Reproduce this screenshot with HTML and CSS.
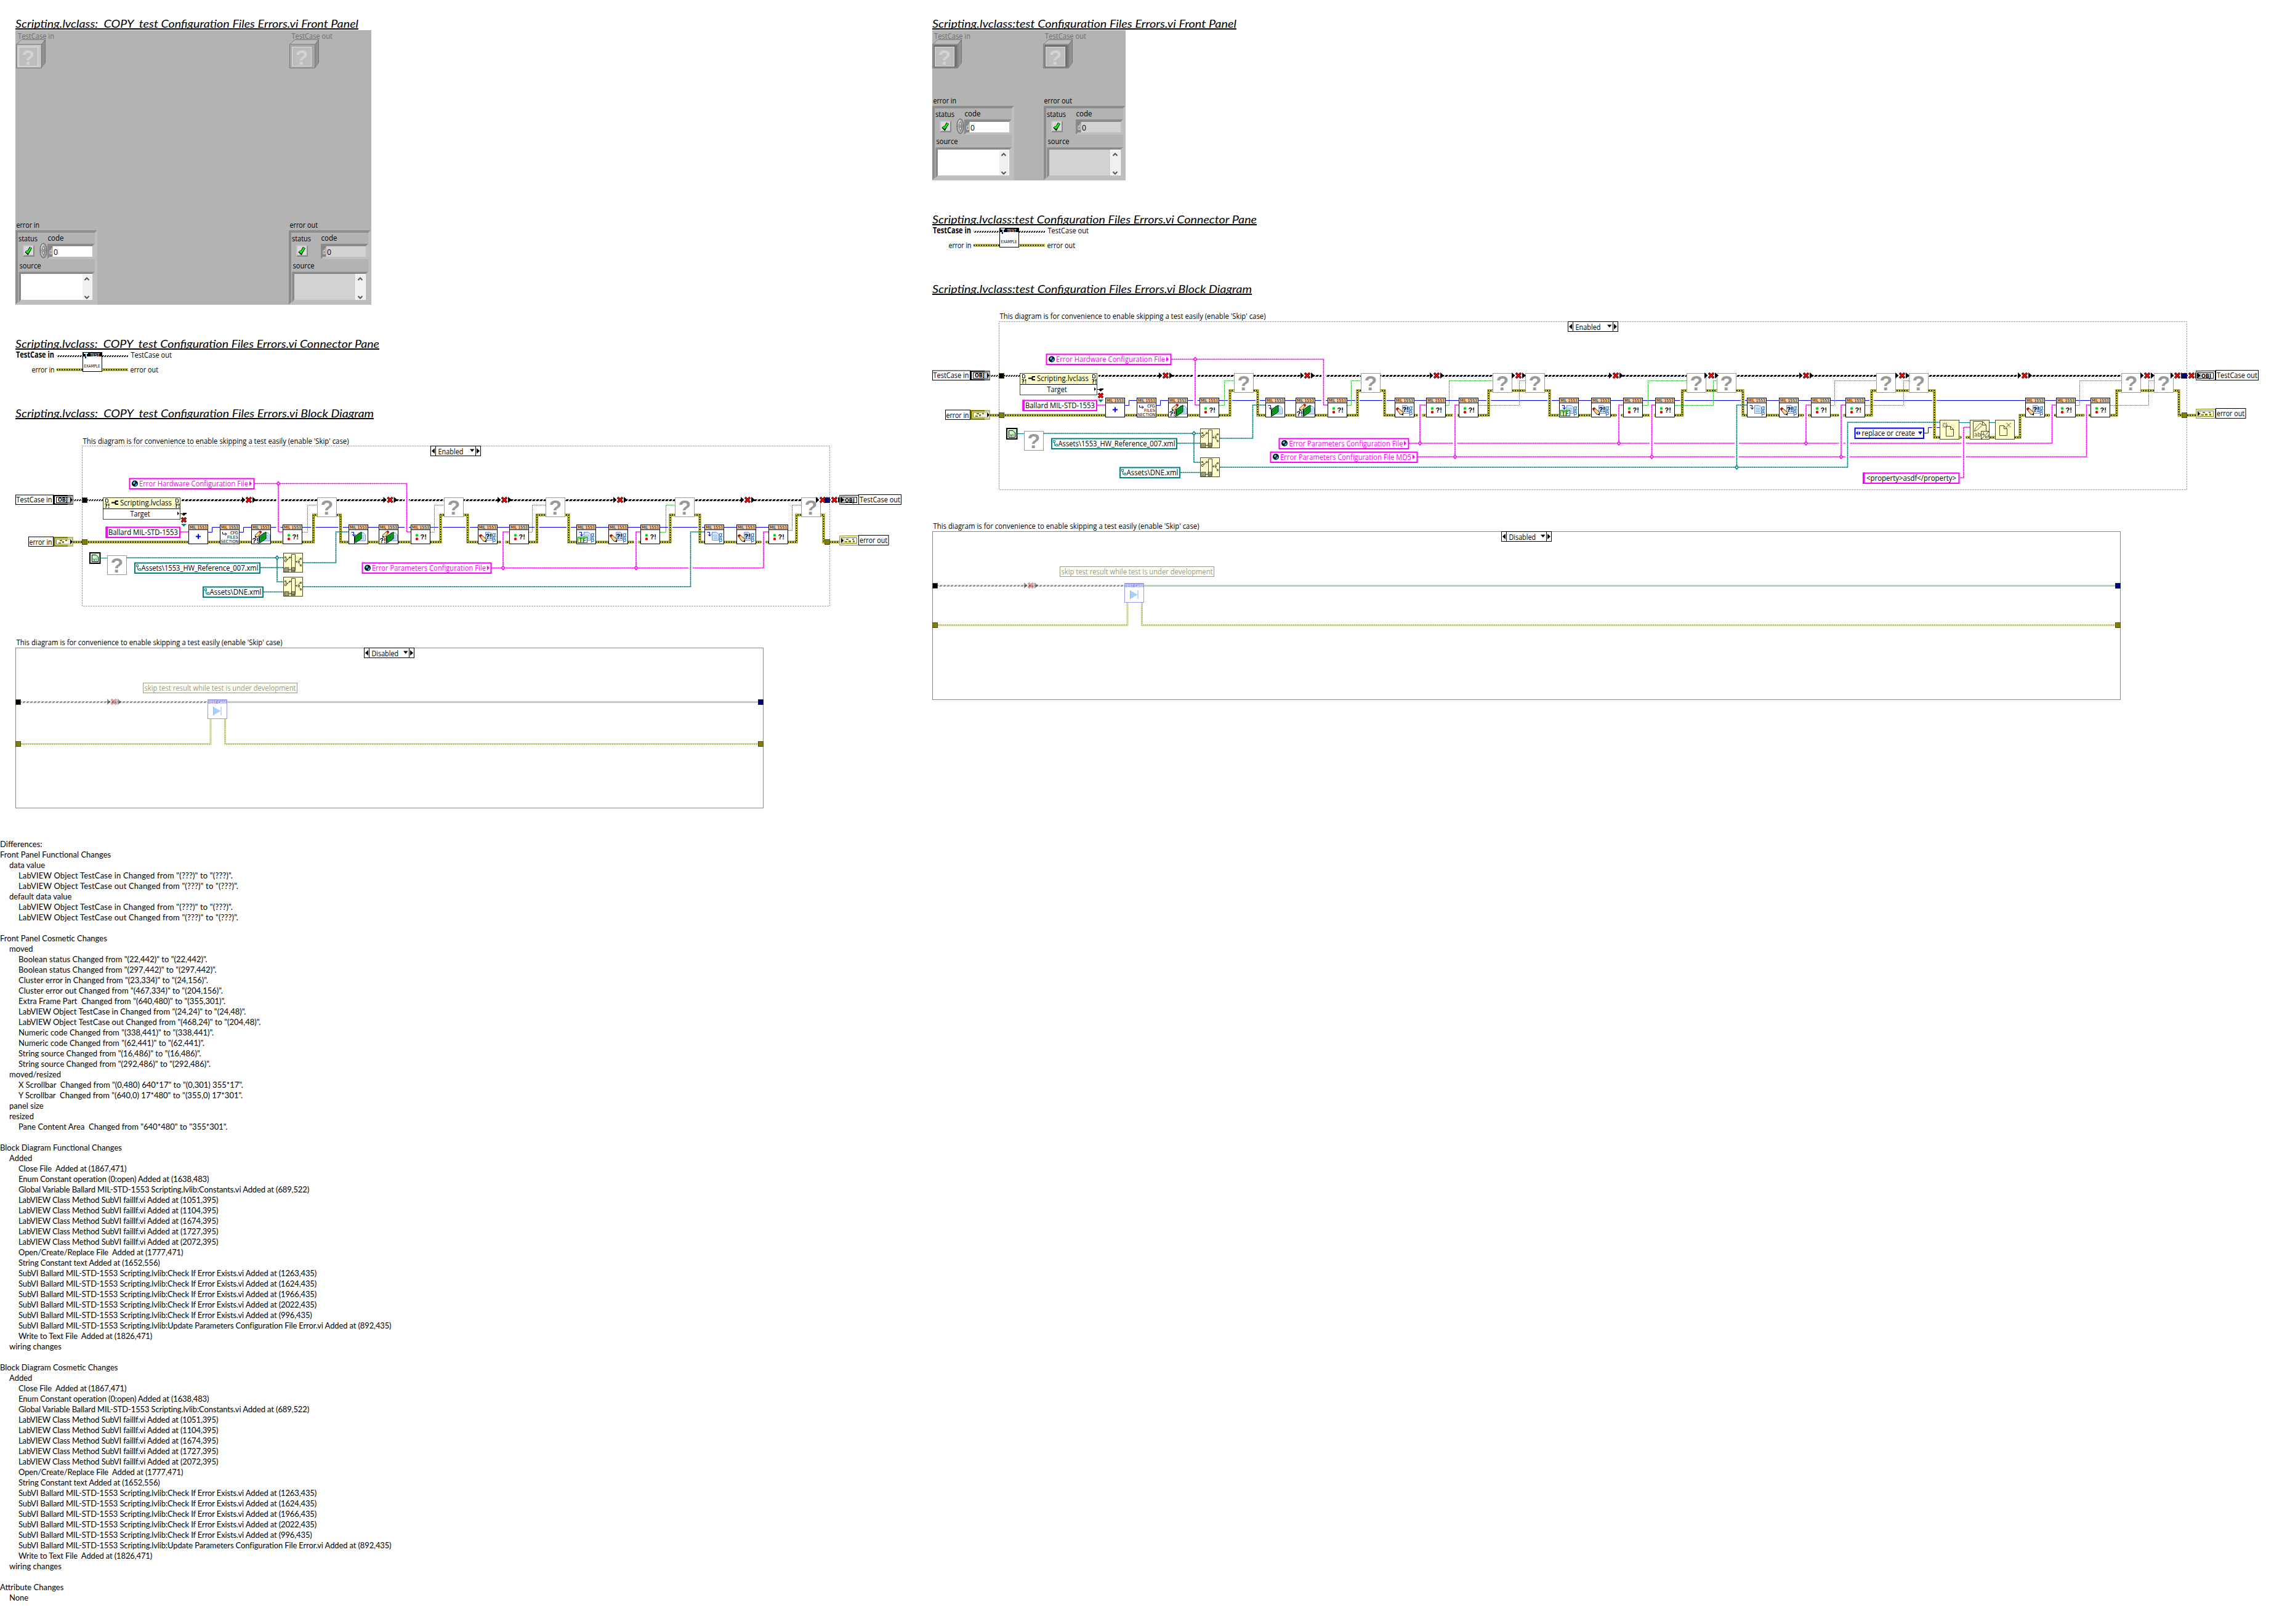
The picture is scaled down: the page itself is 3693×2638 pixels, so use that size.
FILE: index.html
```html
<!DOCTYPE html>
<html lang="en">
<head>
<meta charset="utf-8">
<title>VI comparison report</title>
<link rel="stylesheet" href="styles.css">
</head>
<body>
<svg class="library" width="0" height="0" aria-hidden="true">
  <defs>
    <pattern id="bus" width="6" height="3" patternUnits="userSpaceOnUse"><path d="M2 0H6L4 3H0Z"/></pattern>
    <pattern id="bus-off" width="6" height="3" patternUnits="userSpaceOnUse"><path d="M2 0H6L4 3H0Z" fill="#999"/></pattern>
    <pattern id="bus-fine" width="4" height="3" patternUnits="userSpaceOnUse"><path d="M2 0H4L2 3H0Z"/></pattern>
    <pattern id="hatch" width="2" height="2" patternUnits="userSpaceOnUse"><path d="M0 0h1v1h1v1h-1v-1h-1z" fill="#4a4a30"/></pattern>

    <g id="vi">
      <rect x=".5" y=".5" width="31" height="31" fill="#fff" stroke="#000"/>
      <rect x="1" y="1" width="30" height="7" fill="#fc9"/>
      <path d="M1 8.5H31" stroke="#000"/>
      <text class="tiny" x="2" y="7.2" textLength="28" lengthAdjust="spacingAndGlyphs">MIL 1553</text>
    </g>
    <g id="doc">
      <path d="M.5 .5H8L11.500 4V13.500H.5Z" fill="#cfe4ff" stroke="#7d93c4"/>
      <path d="M2.500 5.500H9M2.500 8H9M2.500 10.500H9" stroke="#8ab4ee"/>
    </g>
    <g id="pencil">
      <path d="M0 1L3 -1L12 7L11 11L7 10Z" fill="#ffd98a" stroke="#000" stroke-width=".8"/>
      <path d="M0 1L3 -1L5 1L2 4Z" fill="#e00000"/>
      <path d="M9 10L12 8V12Z"/>
    </g>
    <g id="alphabeta" class="greek"><text x="23" y="20">α</text><text x="23" y="28">β</text></g>
    <g id="load" fill="none" stroke="#00009c"><path d="M4.500 12.500H8.500V18.500M6 16L8.500 19L11 16"/></g>
    <g id="card"><path d="M13 19L24 12V23L14 30Z" fill="#00a020" stroke="#003000"/><path d="M16 20L21 17V21L16 24Z" fill="#267a26"/><path d="M12.500 19V31" stroke="#000"/></g>
    <g id="vi-new"><use href="#vi"/><path d="M12 19.500H20M16 15.500V23.500" stroke="#00f" stroke-width="2"/></g>
    <g id="vi-cfg"><use href="#vi"/><path d="M4.500 12V15.500H11M8.500 13L11 15.500L8.500 18" fill="none" stroke="#00009c"/>
      <g class="tiny"><text x="17" y="16" textLength="13">CFG</text><text x="12" y="23" textLength="18" lengthAdjust="spacingAndGlyphs">FILES</text><text x="1.500" y="30" textLength="29" lengthAdjust="spacingAndGlyphs">SECTION</text></g></g>
    <g id="vi-compare"><use href="#vi"/><circle cx="10" cy="17.500" r="2.200" fill="#00d800"/><circle cx="10" cy="23.500" r="2.200" fill="#e00000"/><text class="mark" x="15.500" y="24">?!</text></g>
    <g id="vi-card"><use href="#vi"/><use href="#doc" x="19" y="13"/><use href="#card"/><use href="#pencil" transform="translate(17 11) scale(-.9 .9)"/><text class="mark" x="1.500" y="30">?!</text></g>
    <g id="vi-loadcard"><use href="#vi"/><use href="#doc" x="16" y="13"/><use href="#card" x="-3"/><use href="#load"/></g>
    <g id="vi-edit"><use href="#vi"/><use href="#doc" x="12" y="12"/><use href="#pencil" x="2" y="17"/><text class="mark" x="12.500" y="23">?!</text><use href="#alphabeta"/></g>
    <g id="vi-load"><use href="#vi"/><use href="#doc" x="12" y="12"/><use href="#load"/><use href="#alphabeta"/></g>
    <g id="vi-tf"><use href="#vi-load"/><rect x="2.500" y="20.500" width="15" height="9" fill="#fff" stroke="#008000"/><text class="tf" x="4" y="28.500">TF</text></g>

    <g id="unknown"><rect x=".5" y=".5" width="31" height="31" fill="#fff" stroke="#999"/><text class="query" x="16" y="28">?</text></g>
    <g id="cut">
      <rect x="-7" y="-4" width="14" height="8" fill="#fff"/>
      <path d="M-11 -5L-5.500 0L-11 5ZM6 -5L12 0L6 5Z"/>
      <path d="M-4 -4L4 4M4 -4L-4 4" stroke="#000" stroke-width="3.600"/>
      <path d="M-4 4L4 -4M-3.500 -3.500L3.500 3.500" stroke="#f00" stroke-width="2.300"/>
    </g>
    <g id="build"><rect x=".5" y=".5" width="31" height="31" fill="#ffc" stroke="#4a4a30"/>
      <path d="M13.500 2.500H19.500V28.500H13.500ZM2.500 6.500h2v2h-2zM6.500 11.500h-4v3h2zM4 8L7 11L10 8M9 7.500H13M11 5.500V9.500M20 14.500H23M22 12.500V16.500M24.500 12.500L28 9.500M24.500 16L28 19.500M24.500 13.500h2v2h-2zM27.500 8.500h2v2h-2zM27.500 19.500h2v2h-2zM9 27.500H13" fill="none" stroke="#4a4a30"/>
      <path d="M2 24h7v7H2zM13 24h6v7H13z" fill="url(#hatch)" stroke="#4a4a30"/></g>
    <g id="globe"><circle r="5" fill="#000"/><path d="M-3 -2L0 -4L1 -1L-1 1L-3 0ZM1 1L4 -1L3 3L0 4Z" fill="#2cf"/></g>
    <g id="pathmark" fill="none" stroke="#008080"><path d="M.5 .5h3v3h-3zM2.500 4V8.500H4M4.500 6.500h3v3h-3z"/></g>
    <g id="selector"><rect x=".5" y=".5" width="81" height="16" fill="#fff" stroke="#000"/><path d="M8.500 0V17M73.500 0V17" stroke="#000"/><path d="M7 4V13L2 8.500ZM75 4V13L80 8.500ZM64 5.500H71.500L67.800 10Z"/></g>

    <g id="obj-in"><rect width="32" height="16"/><rect x="2" y="2" width="29" height="12" fill="#fff"/><rect x="4.500" y="3.500" width="24" height="9" fill="#fff" stroke="#000"/><text class="obj" x="7" y="11" textLength="16" lengthAdjust="spacingAndGlyphs">OBJ</text><rect x="23" width="9" height="16" fill="#aaa" opacity=".55"/><path d="M27 4V12L31 8Z"/></g>
    <g id="obj-out"><rect x=".5" y=".5" width="31" height="15" fill="#fff" stroke="#000"/><rect x="3.500" y="3.500" width="25" height="9" fill="#fff" stroke="#000"/><text class="obj" x="9" y="11.500" textLength="16" lengthAdjust="spacingAndGlyphs">OBJ</text><rect width="9" height="16" fill="#888" opacity=".5"/><path d="M2 3V13L8 8Z"/></g>
    <g id="err-in"><rect width="32" height="16" fill="#808000"/><rect x="3" y="2.500" width="27" height="11" fill="#fff"/><rect x="4.500" y="4" width="23" height="8" fill="#fff" stroke="#808000"/><path d="M8 9h4v2H8zM14 7h3v3h-3zM19 5h3v2h-3zM10 5h4v2h-4z" fill="#808000"/><rect x="23" width="9" height="16" fill="#ddc" opacity=".6"/><path d="M27 4V12L31 8Z"/></g>
    <g id="err-out"><rect x=".5" y=".5" width="31" height="15" fill="#fff" stroke="#808000"/><rect x="3.500" y="3.500" width="25" height="9" fill="#fff" stroke="#808000"/><path d="M11 5h4v2h-4zM9 9h4v2H9zM15 8h4v3h-4zM21 5h3v2h-3zM22 8h3v3h-3z" fill="#808000"/><rect width="9" height="16" fill="#bb8" opacity=".5"/><path d="M3 4V12L7 8Z"/></g>

    <g id="skip"><rect x=".5" y=".5" width="31" height="31" fill="#fff" stroke="#99e"/><rect x="1" y="1" width="30" height="6" fill="#99e"/><text class="tiny light" x="1" y="6.500" textLength="30" lengthAdjust="spacingAndGlyphs">TEST CASE</text><path d="M9.500 12V26L21.500 19Z" fill="#a8d0ff"/><path d="M9.500 12V26M22 12V26" stroke="#9ab8d8"/></g>

    <g id="cube"><path d="M.5 8L9 .5H47.500V38L41 46.500H.5Z" fill="#aaa" stroke="#777"/><path d="M1 8L9 1H47L41 8Z" fill="#bcbcbc"/><path d="M41.500 8L47 1V38L41.500 46Z" fill="#909090"/><path d="M.5 8H41.500V46.500M41.500 8L47.500 .5" fill="none" stroke="#777"/>
      <rect x="2" y="9" width="38.500" height="36.500" fill="currentColor"/><rect x="4.500" y="12.500" width="31" height="31" fill="#bdbdbd" stroke="#dcdcdc"/><text class="query pale" x="20" y="41">?</text></g>

    <g id="cluster">
      <rect width="133" height="121" fill="#b3b3b3"/>
      <path d="M0 0H133L129 4H4V117L0 121Z" fill="#8d8d8d"/><path d="M133 0V121H0L4 117H129V4Z" fill="#bebebe"/>
      <text class="t" x="5" y="17.500" textLength="31" lengthAdjust="spacingAndGlyphs">status</text><text class="t" x="52.500" y="16.500" textLength="26" lengthAdjust="spacingAndGlyphs">code</text><text class="t" x="6.500" y="61.500" textLength="35" lengthAdjust="spacingAndGlyphs">source</text>
      <rect x="12" y="24" width="19" height="19" fill="#8a8a8a"/><path d="M12 43V24H31L29 26H14V41Z" fill="#c4c4c4"/><rect x="14" y="26" width="15" height="14.500" fill="#dadada"/><path d="M17 34L20 37L25 28" fill="none" stroke="#000" stroke-width="4.500"/><path d="M17.500 34L20 36L25 28.500" fill="none" stroke="#0f0" stroke-width="2.600"/>
      <path d="M52 22H129L125 26H56V43L52 47Z" fill="#8a8a8a"/><path d="M129 22V47H52L56 43H125V26Z" fill="#bfbfbf"/><rect x="56" y="26" width="69" height="17" fill="currentColor"/><rect x="55" y="26" width="5.500" height="17" fill="#858585"/><text class="t radix" x="55" y="39" textLength="5" lengthAdjust="spacingAndGlyphs">d</text><text class="t" x="62" y="39.500" textLength="7" lengthAdjust="spacingAndGlyphs">0</text>
      <path d="M5.500 67.500H129L125 71H9V113L5.500 117Z" fill="#8a8a8a"/><path d="M129 67.500V117H5.500L9 113H125V71Z" fill="#bfbfbf"/><rect x="9" y="71" width="116" height="42" fill="currentColor"/><rect x="108" y="71" width="17" height="42" fill="#fff"/><rect x="109" y="72" width="15" height="40" fill="#f0f0f0"/>
      <path d="M112.500 81L116 77.500L119.500 81M112.500 107L116 110.500L119.500 107" fill="none" stroke="#555" stroke-width="2"/>
    </g>
    <g id="spinner"><ellipse cx="45.500" cy="33" rx="5.500" ry="12" fill="#a4a4a4" stroke="#5c5c5c"/><ellipse cx="44.500" cy="32" rx="3" ry="9.500" fill="#cfcfcf"/><path d="M43 31L45.500 25.500L48 31ZM43 35L45.500 40.500L48 35Z" fill="#eee" stroke="#444" stroke-width=".8"/><path d="M40.500 33H50.500" stroke="#666"/></g>

    <path id="pane-error" d="M67 32.500H183"/>
    <g id="pane">
      <rect y="9" x="67" width="42" height="3" fill="url(#bus-fine)"/><rect y="9" x="141" width="42" height="3" fill="url(#bus-fine)"/>
      <use href="#pane-error" class="err-a"/><use href="#pane-error" class="err-b"/><use href="#pane-error" class="err-c"/>
      <rect x="109.500" y="4.500" width="31" height="31" fill="#fff" stroke="#000"/><rect x="110" y="5" width="30" height="6"/><path d="M111 5h7v2h-2v5h-2v-5h-3z" fill="#bff"/><path d="M113 11h2v3h-2z" fill="#00f"/><text class="tiny light" x="121" y="10.500" textLength="16">TEST</text><text class="tiny" x="111.500" y="29" textLength="26" lengthAdjust="spacingAndGlyphs">EXAMPLE</text>
      <text class="t bold" x="1" y="12.500" textLength="62" lengthAdjust="spacingAndGlyphs">TestCase in</text><text class="t" x="187.500" y="12.500" textLength="66.500" lengthAdjust="spacingAndGlyphs">TestCase out</text>
      <text class="t" x="26.500" y="36.500" textLength="37" lengthAdjust="spacingAndGlyphs">error in</text><text class="t" x="186.500" y="36.500" textLength="45.500" lengthAdjust="spacingAndGlyphs">error out</text>
    </g>

    <!-- Parts common to both block diagrams: object row, then VI row -->
    <g id="object-row">
      <rect x="25.500" y="804" width="61" height="15.500" fill="#fff" stroke="#000"/><text class="t" x="26.500" y="816" textLength="58" lengthAdjust="spacingAndGlyphs">TestCase in</text>
      <use href="#obj-in" x="87" y="804"/><g transform="translate(0 811)"><rect x="119" width="48" height="3" fill="url(#bus-fine)"/></g>
      <rect x="133.500" y="808.500" width="8" height="8" stroke="#4a4a30"/>
      <rect x="167.500" y="808.500" width="125" height="35" fill="#fff" stroke="#4a4a30"/><rect x="168" y="809" width="124" height="17" fill="#ffc"/><path d="M167 826.500H293" stroke="#000"/>
      <path d="M171.500 810.500h3l1 1.500v4h-4zM285.500 810.500h3l1 1.500v4h-4z" fill="#fff" stroke="#000"/><text class="micro" x="170" y="824.500">?!</text><text class="micro" x="284" y="824.500">?!</text>
      <path d="M181 816.500H187M187 814H192M187 819H192M187.500 814V819" fill="none" stroke="#000" stroke-width="2"/>
      <text class="t" x="195" y="821" textLength="84" lengthAdjust="spacingAndGlyphs">Scripting.lvclass</text><text class="t" x="211.500" y="839" textLength="32" lengthAdjust="spacingAndGlyphs">Target</text>
      <path d="M288 831V837L291 834ZM294 834H303L298.500 838ZM297 833H303V835H297Z"/><path d="M293 834.500H303" stroke="#000"/><path d="M295 841L302 848M302 841L295 848" stroke="#000" stroke-width="3.600"/><path d="M295 848L302 841M295.500 841.500L301.500 847.500" stroke="#f00" stroke-width="2.200"/><path d="M294 851H303L298.500 855.500Z" fill="#008080"/>
      <rect x="210.500" y="777.500" width="202" height="16.500" fill="#fff" stroke="#f0f" stroke-width="2"/><use href="#globe" x="219" y="785.500"/><text class="t pink" x="226" y="790" textLength="177" lengthAdjust="spacingAndGlyphs">Error Hardware Configuration File</text><path d="M405 781.500V789.500L409 785.500Z" fill="#f0f"/>
      <rect x="146" y="898" width="16.500" height="17" fill="#cfc" stroke="#000" stroke-width="2"/><path d="M149.500 901.500H156L159.500 905V912.500H149.500Z" fill="#cfc" stroke="#000"/><text class="tiny" x="151" y="911">vi</text><path class="teal-thin" d="M163 906.500H174"/><use href="#unknown" x="174" y="902"/>
      <path class="teal" d="M206 906H460"/><path class="teal" d="M423 922H460"/>
      <rect x="219" y="914.500" width="203" height="16.500" fill="#fff" stroke="#008080" stroke-width="2"/><use href="#pathmark" x="221" y="917"/><text class="t" x="229.500" y="927" textLength="190" lengthAdjust="spacingAndGlyphs">Assets\1553_HW_Reference_007.xml</text>
    </g>
    <g id="vi-row">
      <rect x="46.500" y="872" width="40" height="15.500" fill="#fff" stroke="#000"/><text class="t" x="47.500" y="884.500" textLength="37" lengthAdjust="spacingAndGlyphs">error in</text><use href="#err-in" x="87" y="872"/>
      <rect x="133.500" y="876.500" width="8" height="8" fill="#808000" stroke="#4a4a30"/>
      <rect x="172.500" y="856.500" width="119.500" height="16.500" fill="#fff" stroke="#f0f" stroke-width="2"/><rect x="171.500" y="855.500" width="3.500" height="18.500" fill="#f0f"/><text class="t" x="176" y="869" textLength="113" lengthAdjust="spacingAndGlyphs">Ballard MIL-STD-1553</text><path class="pink-a" d="M293 864H306"/>
      <use href="#vi-new" x="306" y="852"/><use href="#vi-cfg" x="357" y="852"/><use href="#vi-card" x="408" y="852"/><use href="#vi-compare" x="459" y="852"/><use href="#vi-loadcard" x="566" y="852"/><use href="#vi-card" x="615" y="852"/><use href="#vi-compare" x="667" y="852"/>
    </g>
    <g id="dne"><rect x="330" y="953.500" width="97" height="16.500" fill="#fff" stroke="#008080" stroke-width="2"/><use href="#pathmark" x="332" y="956"/><text class="t" x="340.500" y="966" textLength="84" lengthAdjust="spacingAndGlyphs">Assets\DNE.xml</text><path class="teal" d="M428 961.500H460"/></g>
    <g id="skip-body">
      <text class="t" x="26.500" y="1048" textLength="432" lengthAdjust="spacingAndGlyphs">This diagram is for convenience to enable skipping a test easily (enable 'Skip' case)</text>
      <rect x="232.500" y="1109.500" width="250" height="16" fill="#fffff0" stroke="#999"/><text class="t faded" x="234.500" y="1122" textLength="246" lengthAdjust="spacingAndGlyphs">skip test result while test is under development</text>
      <g transform="translate(0 1139)"><rect x="34" width="303" height="3" fill="url(#bus-off)"/></g><use href="#cut" x="185" y="1140" opacity=".4"/>
      <rect x="25.500" y="1136.500" width="8" height="8" stroke="#4a4a30"/>
    </g>

    <!-- Error wires -->
    <path id="error-copy" d="M119 880.500H509V836.500H553V880.500H715.500V836.500H759.500V880.500H872V836.500H923.500V880.500H1088.500V836.500H1136.500V880.500H1293.500V836.500H1337.500V880.500H1363"/>
    <path id="error-test" d="M1608 674.500H1997.500V634.500H2042.500V674.500H2204.500V634.500H2248.500V674.500H2417.500V634.500H2516.500V674.500H2732V634.500H2830.500V674.500H3039.500V634.500H3141.500V710.500H3280.500V674.500H3437.500V634.500H3538.500V674.500H3567"/>
    <path id="error-copy-off" d="M34 1208.500H342V1168M365.500 1168V1208.500H1231"/>
    <path id="error-test-off" d="M1523 1015.500H1831V979M1854.500 979V1015.500H3435"/>
  </defs>
</svg>

<main class="report">
  <div class="side">
    <section class="front">
      <h2><svg width="557" height="21"><text class="title" y="19.500" textLength="557" lengthAdjust="spacingAndGlyphs">Scripting.lvclass:&#160; COPY&#160; test Configuration Files Errors.vi Front Panel</text></svg></h2>
      <svg class="figure" width="578" height="446" viewBox="25 49 578 446">
        <rect x="25" y="49" width="578" height="446" fill="#b3b3b3"/>
        <text class="t dim" x="29" y="62.500" textLength="59" lengthAdjust="spacingAndGlyphs">TestCase in</text><text class="t dim" x="473.500" y="62.500" textLength="66.500" lengthAdjust="spacingAndGlyphs">TestCase out</text>
        <use href="#cube" x="26" y="64" color="#c8c8c8"/><use href="#cube" x="470" y="64" color="#a8a8a8"/>
        <text class="t" x="26.500" y="369.500" textLength="37.500" lengthAdjust="spacingAndGlyphs">error in</text><text class="t" x="470.500" y="369.500" textLength="45.500" lengthAdjust="spacingAndGlyphs">error out</text>
        <use href="#cluster" x="25" y="374" color="#fff"/><use href="#spinner" x="25" y="374"/><use href="#cluster" x="469" y="374" color="#d2d2d2"/>
      </svg>
    </section>
    <section class="connector">
      <h2><svg width="591" height="21"><text class="title" y="19.500" textLength="591" lengthAdjust="spacingAndGlyphs">Scripting.lvclass:&#160; COPY&#160; test Configuration Files Errors.vi Connector Pane</text></svg></h2>
      <svg class="figure" width="300" height="90"><use href="#pane"/></svg>
    </section>
    <section class="block">
      <h2><svg width="582" height="21"><text class="title" y="19.500" textLength="582" lengthAdjust="spacingAndGlyphs">Scripting.lvclass:&#160; COPY&#160; test Configuration Files Errors.vi Block Diagram</text></svg></h2>
      <svg class="figure" width="1460" height="350" viewBox="25 681 1460 350">
        <text class="t" x="134.500" y="720.500" textLength="432" lengthAdjust="spacingAndGlyphs">This diagram is for convenience to enable skipping a test easily (enable 'Skip' case)</text>
        <path class="frame" d="M133.500 724.500H1347.500V984.500H133.500Z"/>
        <use href="#selector" x="699" y="724"/><text class="t" x="711.500" y="737.500" textLength="41" lengthAdjust="spacingAndGlyphs">Enabled</text>
        <g transform="translate(0 811)"><rect x="295" width="1040" height="3" fill="url(#bus)"/></g>
        <path class="bool" d="M491 864.500H499.500V820.500H515M699 864.500H705.500V820.500H721M859 864.500H864.500V820.500H886M1072 864.500H1081.500V820.500H1096M1280 861.500H1286.500V820.500H1301"/>
        <path class="blue" d="M338 864.500H344.500V856.500H357M389 864.500H395.500V856.500H408M440 856.500H1248"/>
        <use href="#error-copy" class="halo"/><use href="#error-copy" class="err-a"/><use href="#error-copy" class="err-b"/><use href="#error-copy" class="err-c"/>
        <path class="halo" d="M452 786V862M660.500 786V862M817 918V866M1033 918V866M1240 918V866"/>
        <path class="pink-a" d="M413 785.500H660.500V864H667M452 786V864H459M798 922.500H1240V864H1248M817 922V864H827M1033 922V864H1040"/>
        <path class="dot-pink" d="M452 782.500l2.500 3-2.500 3-2.500-3zM817 919.500l2.500 3-2.500 3-2.500-3zM1033 919.500l2.500 3-2.500 3-2.500-3z"/>
        <path class="halo" d="M1121.500 928V917"/>
        <path class="teal" d="M450 906V945H460M492 914H545.500V864H566M492 953H1121.500V864H1144"/>
        <use href="#object-row"/><use href="#dne"/><use href="#vi-row"/>
        <path class="dot-teal" d="M450 903l2.500 3-2.500 3-2.500-3z"/>
        <use href="#build" x="460" y="898"/><use href="#build" x="460" y="937"/>
        <rect x="588.500" y="914.500" width="209" height="16.500" fill="#fff" stroke="#f0f" stroke-width="2"/><use href="#globe" x="597" y="922.500"/><text class="t pink" x="604" y="927" textLength="185" lengthAdjust="spacingAndGlyphs">Error Parameters Configuration File</text><path d="M791 918.500V926.500L795 922.500Z" fill="#f0f"/>
        <use href="#unknown" x="515" y="808"/><use href="#unknown" x="721" y="808"/><use href="#unknown" x="886" y="808"/><use href="#unknown" x="1096" y="808"/><use href="#unknown" x="1301" y="808"/>
        <use href="#vi-edit" x="776" y="852"/><use href="#vi-compare" x="827" y="852"/><use href="#vi-tf" x="936" y="852"/><use href="#vi-edit" x="988" y="852"/><use href="#vi-compare" x="1040" y="852"/><use href="#vi-load" x="1144" y="852"/><use href="#vi-edit" x="1196" y="852"/><use href="#vi-compare" x="1248" y="852"/>
        <use href="#cut" x="404" y="812"/><use href="#cut" x="633.500" y="812"/><use href="#cut" x="819" y="812"/><use href="#cut" x="1007" y="812"/><use href="#cut" x="1214" y="812"/><use href="#cut" x="1336" y="812"/><use href="#cut" x="1355" y="812"/>
        <rect x="1339.500" y="808.500" width="8" height="8" fill="#000080" stroke="#223"/><rect x="1339.500" y="876.500" width="8" height="8" fill="#808000" stroke="#4a4a30"/>
        <use href="#obj-out" x="1363" y="804"/><rect x="1394.500" y="803.500" width="69" height="16" fill="#fff" stroke="#000"/><text class="t" x="1396" y="816" textLength="66" lengthAdjust="spacingAndGlyphs">TestCase out</text>
        <use href="#err-out" x="1363" y="870"/><rect x="1394.500" y="869.500" width="48.500" height="16" fill="#fff" stroke="#000"/><text class="t" x="1396" y="882" textLength="45" lengthAdjust="spacingAndGlyphs">error out</text>
      </svg>
      <svg class="figure" width="1460" height="332" viewBox="25 1031 1460 332">
        <rect x="25.500" y="1052.500" width="1214" height="260" fill="none" stroke="#888"/>
        <use href="#skip-body"/>
        <use href="#selector" x="591" y="1052"/><text class="t" x="603.500" y="1065.500" textLength="43.500" lengthAdjust="spacingAndGlyphs">Disabled</text>
        <path class="off-a" d="M369 1140.500H1231"/>
        <use href="#error-copy-off" class="offerr-a"/><use href="#error-copy-off" class="offerr-b"/><use href="#error-copy-off" class="offerr-c"/>
        <use href="#skip" x="337" y="1136"/>
        <rect x="25.500" y="1204.500" width="8" height="8" fill="#808000" stroke="#4a4a30"/><rect x="1231.500" y="1204.500" width="8" height="8" fill="#808000" stroke="#4a4a30"/><rect x="1231.500" y="1136.500" width="8" height="8" fill="#000080" stroke="#223"/>
      </svg>
    </section>
    <section class="differences">
      <p>Differences:</p>
      <h3>Front Panel Functional Changes</h3>
      <ul>
        <li>data value<ul class="values"><li>LabVIEW Object TestCase in Changed from "(???)" to "(???)".</li><li>LabVIEW Object TestCase out Changed from "(???)" to "(???)".</li></ul></li>
        <li>default data value<ul class="values"><li>LabVIEW Object TestCase in Changed from "(???)" to "(???)".</li><li>LabVIEW Object TestCase out Changed from "(???)" to "(???)".</li></ul></li>
      </ul>
      <h3>Front Panel Cosmetic Changes</h3>
      <ul>
        <li>moved<ul>
          <li>Boolean status Changed from "(22,442)" to "(22,442)".</li>
          <li>Boolean status Changed from "(297,442)" to "(297,442)".</li>
          <li>Cluster error in Changed from "(23,334)" to "(24,156)".</li>
          <li>Cluster error out Changed from "(467,334)" to "(204,156)".</li>
          <li>Extra Frame Part&#160; Changed from "(640,480)" to "(355,301)".</li>
          <li>LabVIEW Object TestCase in Changed from "(24,24)" to "(24,48)".</li>
          <li>LabVIEW Object TestCase out Changed from "(468,24)" to "(204,48)".</li>
          <li>Numeric code Changed from "(338,441)" to "(338,441)".</li>
          <li>Numeric code Changed from "(62,441)" to "(62,441)".</li>
          <li>String source Changed from "(16,486)" to "(16,486)".</li>
          <li>String source Changed from "(292,486)" to "(292,486)".</li></ul></li>
        <li>moved/resized<ul>
          <li>X Scrollbar&#160; Changed from "(0,480) 640*17" to "(0,301) 355*17".</li>
          <li>Y Scrollbar&#160; Changed from "(640,0) 17*480" to "(355,0) 17*301".</li></ul></li>
        <li>panel size</li>
        <li>resized<ul><li>Pane Content Area&#160; Changed from "640*480" to "355*301".</li></ul></li>
      </ul>
      <h3>Block Diagram Functional Changes</h3>
      <ul>
        <li>Added<ul class="added">
          <li>Close File&#160; Added at (1867,471)</li>
          <li>Enum Constant operation (0:open) Added at (1638,483)</li>
          <li>Global Variable Ballard MIL-STD-1553 Scripting.lvlib:Constants.vi Added at (689,522)</li>
          <li>LabVIEW Class Method SubVI failIf.vi Added at (1051,395)</li>
          <li>LabVIEW Class Method SubVI failIf.vi Added at (1104,395)</li>
          <li>LabVIEW Class Method SubVI failIf.vi Added at (1674,395)</li>
          <li>LabVIEW Class Method SubVI failIf.vi Added at (1727,395)</li>
          <li>LabVIEW Class Method SubVI failIf.vi Added at (2072,395)</li>
          <li>Open/Create/Replace File&#160; Added at (1777,471)</li>
          <li>String Constant text Added at (1652,556)</li>
          <li>SubVI Ballard MIL-STD-1553 Scripting.lvlib:Check If Error Exists.vi Added at (1263,435)</li>
          <li>SubVI Ballard MIL-STD-1553 Scripting.lvlib:Check If Error Exists.vi Added at (1624,435)</li>
          <li>SubVI Ballard MIL-STD-1553 Scripting.lvlib:Check If Error Exists.vi Added at (1966,435)</li>
          <li>SubVI Ballard MIL-STD-1553 Scripting.lvlib:Check If Error Exists.vi Added at (2022,435)</li>
          <li>SubVI Ballard MIL-STD-1553 Scripting.lvlib:Check If Error Exists.vi Added at (996,435)</li>
          <li>SubVI Ballard MIL-STD-1553 Scripting.lvlib:Update Parameters Configuration File Error.vi Added at (892,435)</li>
          <li>Write to Text File&#160; Added at (1826,471)</li></ul></li>
        <li>wiring changes</li>
      </ul>
      <h3>Block Diagram Cosmetic Changes</h3>
      <ul>
        <li>Added<ul class="added">
          <li>Close File&#160; Added at (1867,471)</li>
          <li>Enum Constant operation (0:open) Added at (1638,483)</li>
          <li>Global Variable Ballard MIL-STD-1553 Scripting.lvlib:Constants.vi Added at (689,522)</li>
          <li>LabVIEW Class Method SubVI failIf.vi Added at (1051,395)</li>
          <li>LabVIEW Class Method SubVI failIf.vi Added at (1104,395)</li>
          <li>LabVIEW Class Method SubVI failIf.vi Added at (1674,395)</li>
          <li>LabVIEW Class Method SubVI failIf.vi Added at (1727,395)</li>
          <li>LabVIEW Class Method SubVI failIf.vi Added at (2072,395)</li>
          <li>Open/Create/Replace File&#160; Added at (1777,471)</li>
          <li>String Constant text Added at (1652,556)</li>
          <li>SubVI Ballard MIL-STD-1553 Scripting.lvlib:Check If Error Exists.vi Added at (1263,435)</li>
          <li>SubVI Ballard MIL-STD-1553 Scripting.lvlib:Check If Error Exists.vi Added at (1624,435)</li>
          <li>SubVI Ballard MIL-STD-1553 Scripting.lvlib:Check If Error Exists.vi Added at (1966,435)</li>
          <li>SubVI Ballard MIL-STD-1553 Scripting.lvlib:Check If Error Exists.vi Added at (2022,435)</li>
          <li>SubVI Ballard MIL-STD-1553 Scripting.lvlib:Check If Error Exists.vi Added at (996,435)</li>
          <li>SubVI Ballard MIL-STD-1553 Scripting.lvlib:Update Parameters Configuration File Error.vi Added at (892,435)</li>
          <li>Write to Text File&#160; Added at (1826,471)</li></ul></li>
        <li>wiring changes</li>
      </ul>
      <h3>Attribute Changes</h3>
      <ul><li>None</li></ul>
    </section>
  </div>

  <div class="side">
    <section class="front">
      <h2><svg width="494" height="21"><text class="title" y="19.500" textLength="494" lengthAdjust="spacingAndGlyphs">Scripting.lvclass:test Configuration Files Errors.vi Front Panel</text></svg></h2>
      <svg class="figure" width="314" height="244" viewBox="1514 49 314 244">
        <rect x="1514" y="49" width="314" height="244" fill="#b3b3b3"/>
        <text class="t dim" x="1517" y="62.500" textLength="59" lengthAdjust="spacingAndGlyphs">TestCase in</text><text class="t dim" x="1697" y="62.500" textLength="67" lengthAdjust="spacingAndGlyphs">TestCase out</text>
        <use href="#cube" x="1514" y="64" color="#707070"/><use href="#cube" x="1694" y="64" color="#707070"/>
        <text class="t" x="1515.500" y="167.500" textLength="37.500" lengthAdjust="spacingAndGlyphs">error in</text><text class="t" x="1695.500" y="167.500" textLength="45.500" lengthAdjust="spacingAndGlyphs">error out</text>
        <use href="#cluster" x="1514" y="172" color="#fff"/><use href="#spinner" x="1514" y="172"/><use href="#cluster" x="1695" y="172" color="#d2d2d2"/>
      </svg>
    </section>
    <section class="connector">
      <h2><svg width="527" height="21"><text class="title" y="19.500" textLength="527" lengthAdjust="spacingAndGlyphs">Scripting.lvclass:test Configuration Files Errors.vi Connector Pane</text></svg></h2>
      <svg class="figure" width="300" height="90"><use href="#pane"/></svg>
    </section>
    <section class="block">
      <h2><svg width="519" height="21"><text class="title" y="19.500" textLength="519" lengthAdjust="spacingAndGlyphs">Scripting.lvclass:test Configuration Files Errors.vi Block Diagram</text></svg></h2>
      <svg class="figure" width="2179" height="350" viewBox="1514 479 2179 350">
        <text class="t" x="1623.500" y="518" textLength="432" lengthAdjust="spacingAndGlyphs">This diagram is for convenience to enable skipping a test easily (enable 'Skip' case)</text>
        <path class="frame" d="M1622.500 522.500H3551.500V795.500H1622.500Z"/>
        <use href="#selector" x="2546" y="522"/><text class="t" x="2558.500" y="535.500" textLength="41" lengthAdjust="spacingAndGlyphs">Enabled</text>
        <g transform="translate(0 609)"><rect x="1784" width="1755" height="3" fill="url(#bus)"/></g>
        <path class="blue" d="M1827 658.500H1833.500V650.500H1846M1878 658.500H1884.500V650.500H1897M1929 650.500H3395M3125 703.500H3131.500V694.500H3150"/>
        <use href="#error-test" class="halo"/><use href="#error-test" class="err-a"/><use href="#error-test" class="err-b"/><use href="#error-test" class="err-c"/>
        <path class="bool" d="M1980 658.500H1988.500V618.500H2004M2188 658.500H2194.500V618.500H2210M2348 658.500H2353.500V618.500H2424M2401 658.500H2467.500V618.500H2477M2668 658.500H2676.500V618.500H2739M2720 658.500H2782.500V618.500H2788M2973 658.500H2979.500V618.500H3047M3029 658.500H3091.500V618.500H3100M3371 658.500H3377.500V618.500H3445M3427 658.500H3489.500V618.500H3498"/>
        <path class="halo" d="M1941 584V656M2149.500 584V656M2306 717V660M2629 717V660M2933 717V660M3332.500 717V660"/>
        <path class="pink-a" d="M1902 583.500H2149.500V658H2156M1941 584V658H1948M2288 720H3332.500V658H3339M2306 720V658H2316M2629 720V658H2636M2933 720V658H2941"/>
        <path class="halo" d="M2363 739V660M2682.500 739V660M2990 739V660M3388.500 739V660"/>
        <path class="pink-a" d="M2302 742H3388.500V658H3395M2363 742V658H2369M2682.500 742V658H2688M2990 742V658H2997"/>
        <path class="halo" d="M3189 773V697M2820.500 752V660M3000.500 754V688"/>
        <path class="pink-a" d="M3183 776H3189V694H3199"/>
        <path class="dot-pink" d="M1941 580.500l2.500 3-2.500 3-2.500-3zM2306 717l2.500 3-2.500 3-2.500-3zM2629 717l2.500 3-2.500 3-2.500-3zM2933 717l2.500 3-2.500 3-2.500-3zM2363 739l2.500 3-2.500 3-2.500-3zM2682.500 739l2.500 3-2.500 3-2.500-3zM2990 739l2.500 3-2.500 3-2.500-3z"/>
        <path class="teal" d="M1939 704V751H1949M1981 712H2034.500V658H2055M1981 759H3000.500V686H3150M2820.500 759V658H2837"/>
        <path class="teal-thin" d="M3182 686.500H3199M3231 686.500H3240"/>
        <use href="#object-row" x="1489" y="-202"/><use href="#dne" x="1489" y="-194"/><use href="#vi-row" x="1489" y="-206"/>
        <path class="dot-teal" d="M1939 701l2.500 3-2.500 3-2.500-3zM2820.500 756l2.500 3-2.500 3-2.500-3z"/>
        <use href="#build" x="1949" y="696"/><use href="#build" x="1949" y="743"/>
        <rect x="2077.500" y="712.500" width="210" height="16.500" fill="#fff" stroke="#f0f" stroke-width="2"/><use href="#globe" x="2086" y="720"/><text class="t pink" x="2093.500" y="725" textLength="185" lengthAdjust="spacingAndGlyphs">Error Parameters Configuration File</text><path d="M2280 716V724L2284 720Z" fill="#f0f"/>
        <rect x="2063.500" y="734.500" width="238" height="16.500" fill="#fff" stroke="#f0f" stroke-width="2"/><use href="#globe" x="2072" y="742"/><text class="t pink" x="2079" y="747" textLength="213" lengthAdjust="spacingAndGlyphs">Error Parameters Configuration File MD5</text><path d="M2294 738V746L2298 742Z" fill="#f0f"/>
        <rect x="3012.500" y="695.500" width="111.500" height="16.500" fill="#fff" stroke="#00f" stroke-width="2"/><path d="M3017 700L3014 703.500L3017 707ZM3018.500 700L3021.500 703.500L3018.500 707ZM3115 701H3122L3118.500 706Z" fill="#00f"/><text class="t" x="3023.500" y="708" textLength="86.500" lengthAdjust="spacingAndGlyphs">replace or create</text>
        <rect x="3026.500" y="768.500" width="155" height="16.500" fill="#fff" stroke="#f0f" stroke-width="2"/><rect x="3025" y="767.500" width="3.500" height="18.500" fill="#f0f"/><text class="t" x="3031" y="780.500" textLength="146" lengthAdjust="spacingAndGlyphs">&lt;property&gt;asdf&lt;/property&gt;</text>
        <g fill="#ffc" stroke="#4a4a30"><rect x="3150.500" y="682.500" width="31" height="31"/><rect x="3199.500" y="682.500" width="31" height="31"/><rect x="3240.500" y="682.500" width="31" height="31"/>
          <path d="M3160.500 692.500H3167.500L3172.500 697.500V708.500H3160.500ZM3167.500 692.500V697.500H3172.500M3155 687L3157 689M3158.500 686.500V689M3162 687L3160 689M3154.500 690.500H3157M3160 690.500H3163M3155 694L3157 692M3158.500 692V694.500M3162 694L3160 692"/>
          <path d="M3204.500 711.500V684.500H3219.500L3225.500 690.500V701M3219.500 684.500V690.500H3225.500"/><path d="M3206.500 700.500L3208 695.500L3216 687.500L3219 690.500L3211 698.500Z"/><rect x="3217.500" y="700.500" width="13" height="13"/><path d="M3218 713L3230 701M3221 702V707M3219 705L3221 707L3223 705M3229 706V710H3224M3226 708L3224 710L3226 712"/>
          <path d="M3247.500 691.500H3254.500L3259.500 696.500V707.500H3247.500ZM3254.500 691.500V696.500H3259.500M3258.500 687L3265.500 694M3265.500 687L3258.500 694"/></g>
        <text class="ab" x="3206" y="709">ab</text>
        <use href="#unknown" x="2004" y="606"/><use href="#unknown" x="2210" y="606"/><use href="#unknown" x="2424" y="606"/><use href="#unknown" x="2477" y="606"/><use href="#unknown" x="2739" y="606"/><use href="#unknown" x="2788" y="606"/><use href="#unknown" x="3047" y="606"/><use href="#unknown" x="3100" y="606"/><use href="#unknown" x="3445" y="606"/><use href="#unknown" x="3498" y="606"/>
        <use href="#vi-edit" x="2265" y="646"/><use href="#vi-compare" x="2316" y="646"/><use href="#vi-compare" x="2369" y="646"/><use href="#vi-tf" x="2532" y="646"/><use href="#vi-edit" x="2584" y="646"/><use href="#vi-compare" x="2636" y="646"/><use href="#vi-compare" x="2688" y="646"/><use href="#vi-load" x="2837" y="646"/><use href="#vi-edit" x="2889" y="646"/><use href="#vi-compare" x="2941" y="646"/><use href="#vi-compare" x="2997" y="646"/><use href="#vi-edit" x="3289" y="646"/><use href="#vi-compare" x="3339" y="646"/><use href="#vi-compare" x="3395" y="646"/>
        <use href="#cut" x="1893" y="610"/><use href="#cut" x="2123" y="610"/><use href="#cut" x="2333" y="610"/><use href="#cut" x="2466" y="610"/><use href="#cut" x="2624" y="610"/><use href="#cut" x="2779" y="610"/><use href="#cut" x="2933" y="610"/><use href="#cut" x="3089" y="610"/><use href="#cut" x="3288" y="610"/><use href="#cut" x="3487" y="610"/><use href="#cut" x="3536" y="610"/><use href="#cut" x="3559" y="610"/>
        <rect x="3543.500" y="606.500" width="8" height="8" fill="#000080" stroke="#223"/><rect x="3543.500" y="670.500" width="8" height="8" fill="#808000" stroke="#4a4a30"/>
        <use href="#obj-out" x="3566" y="602"/><rect x="3598.500" y="601.500" width="69" height="16" fill="#fff" stroke="#000"/><text class="t" x="3600" y="614" textLength="66" lengthAdjust="spacingAndGlyphs">TestCase out</text>
        <use href="#err-out" x="3566" y="664"/><rect x="3598.500" y="663.500" width="48.500" height="16" fill="#fff" stroke="#000"/><text class="t" x="3600" y="676" textLength="45" lengthAdjust="spacingAndGlyphs">error out</text>
      </svg>
      <svg class="figure" width="2179" height="332" viewBox="1514 829 2179 332">
        <rect x="1514.500" y="863.500" width="1929" height="273" fill="none" stroke="#888"/>
        <use href="#skip-body" x="1489" y="-189"/>
        <use href="#selector" x="2438" y="863"/><text class="t" x="2450.500" y="876.500" textLength="43.500" lengthAdjust="spacingAndGlyphs">Disabled</text>
        <path class="off-a" d="M1858 951.500H3435"/>
        <use href="#error-test-off" class="offerr-a"/><use href="#error-test-off" class="offerr-b"/><use href="#error-test-off" class="offerr-c"/>
        <use href="#skip" x="1826" y="947"/>
        <rect x="1514.500" y="1011.500" width="8" height="8" fill="#808000" stroke="#4a4a30"/><rect x="3435.500" y="1011.500" width="8" height="8" fill="#808000" stroke="#4a4a30"/><rect x="3435.500" y="947.500" width="8" height="8" fill="#000080" stroke="#223"/>
      </svg>
    </section>
  </div>
</main>
</body>
</html>
```

FILE: styles.css
```css
body { margin: 0; background: #fff; color: #000; font-family: "Open Sans", "Segoe UI", sans-serif; }
.library { position: absolute; }
.report { display: grid; grid-template-columns: 1489px 2204px; }
.side { padding-top: 25px; }
.front, .connector, .block { padding-left: 25px; }
.front { padding-bottom: 50px; }
h2 { margin: 0; width: fit-content; border-bottom: 2px solid #000; font-size: 18px; font-weight: 400; line-height: 0; }
h2 svg { display: block; overflow: visible; }
.front h2 { margin-bottom: 1px; }
.figure { display: block; }

.title { font: italic 400 18px Lato, sans-serif; }
.t { font: 13.3px "Open Sans", sans-serif; }
.bold { font-weight: 700; }
.dim { fill: #6e6e6e; }
.faded { fill: #999; }
.pink { fill: #f0f; }
.radix { fill: #eee; }
.tiny { font: 7px "DejaVu Sans", sans-serif; }
.light { fill: #fff; }
.micro { font: bold 8px "DejaVu Sans", sans-serif; }
.mark { font: bold 11px "Liberation Sans", sans-serif; }
.greek { font: 10px "DejaVu Sans", sans-serif; fill: #0060c0; }
.tf { font: bold 9px "DejaVu Sans", sans-serif; fill: #008000; letter-spacing: -.5px; }
.obj { font: bold 9px "DejaVu Sans", sans-serif; }
.ab { font: 9px "DejaVu Sans", sans-serif; fill: #4a4a30; }
.query { font: bold 34px "Liberation Sans", sans-serif; fill: #999; text-anchor: middle; }
.pale { fill: #d4d4d4; }

.frame { fill: none; stroke: #808080; stroke-dasharray: 2 2; }
.halo { fill: none; stroke: #fff; stroke-width: 7; }
.err-a { fill: none; stroke: #808000; stroke-width: 4; }
.err-b { fill: none; stroke: #ff0; stroke-width: 1.5; }
.err-c { fill: none; stroke: #000; stroke-width: 1.5; stroke-dasharray: 2 2; }
.offerr-a { fill: none; stroke: #cccc99; stroke-width: 3; }
.offerr-b { fill: none; stroke: #ff9; stroke-width: 1; }
.offerr-c { fill: none; stroke: #999; stroke-width: 1; stroke-dasharray: 1 2; }
.off-a { fill: none; stroke: #c2cec2; stroke-width: 3; }
.pink-a { fill: none; stroke: #f0f; stroke-width: 1.6; stroke-dasharray: 3 .4; }
.teal { fill: none; stroke: #008080; stroke-width: 1.6; stroke-dasharray: 3 .4; }
.teal-thin { fill: none; stroke: #008080; }
.blue { fill: none; stroke: #00f; }
.bool { fill: none; stroke: #008000; stroke-dasharray: 1 1; }
.dot-pink { fill: #fff; stroke: #f0f; stroke-width: 1.5; }
.dot-teal { fill: #fff; stroke: #008080; stroke-width: 1.5; }

.differences { font: 13px/17px Lato, Calibri, sans-serif; }
.differences p { margin: 0; }
.differences h3 { margin: 17px 0 0; font: inherit; }
.differences p + h3 { margin-top: 0; }
.differences ul { margin: 0; padding-left: 15px; list-style: none; }
.differences li { white-space: nowrap; }
.values { letter-spacing: .17px; }
.added { letter-spacing: -.13px; }
```
